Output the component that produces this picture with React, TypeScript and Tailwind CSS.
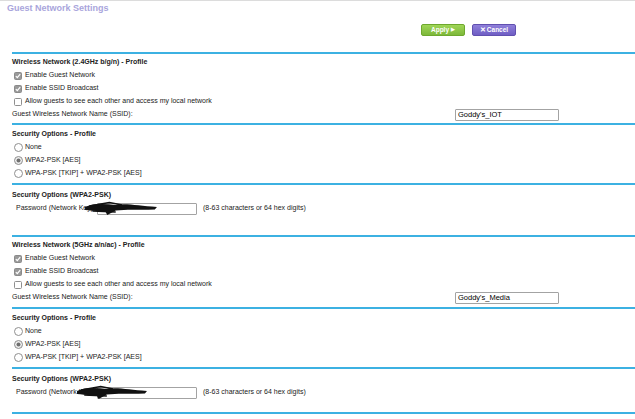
import React from "react";

const font = "font-['Liberation_Sans',Arial,sans-serif]";

function Check({ checked }: { checked?: boolean }) {
  return (
    <svg width="8" height="8" viewBox="0 0 8 8" className="shrink-0">
      <rect x="0.5" y="0.5" width="7" height="7" rx="1" fill={checked ? "#9a9a9a" : "#fff"} stroke={checked ? "#8a8a8a" : "#8f8f8f"} />
      {checked && <path d="M1.8 4.1 L3.3 5.6 L6.2 2.2" fill="none" stroke="#fff" strokeWidth="1.2" />}
    </svg>
  );
}

function Radio({ checked }: { checked?: boolean }) {
  return (
    <svg width="9" height="9" viewBox="0 0 9 9" className="shrink-0">
      <circle cx="4.5" cy="4.5" r="4" fill={checked ? "#eee" : "#fff"} stroke="#8f8f8f" />
      {checked && <circle cx="4.5" cy="4.5" r="2" fill="#6f6f6f" />}
    </svg>
  );
}

function Row({ children, className = "" }: { children: React.ReactNode; className?: string }) {
  return <div className={`flex items-center h-[13px] text-[7px] text-[#222] ${className}`}>{children}</div>;
}

function TextBox({ value, className = "" }: { value?: string; className?: string }) {
  return (
    <div className={`h-[12px] border border-[#a3a3a3] rounded-[1px] bg-white text-[7.5px] text-black pl-[2px] leading-[10px] ${className}`}>
      {value}
    </div>
  );
}

// black marker over the password, as in the screenshot
function Scribble({ left, width }: { left: string; width: number }) {
  return (
    <svg width={width} height="15" viewBox="0 0 70 15" preserveAspectRatio="none" className={`absolute top-[-1px] ${left}`}>
      <path
        d="M1 6 C10 2 20 3 30 4 C40 2 52 5 69 6 L67 8.5 C50 9 40 8 30 9.5 L22 14 L20 10 C12 10.5 6 9.5 1 9 Z"
        fill="#111"
      />
      <path d="M5 5 L24 1.5 L36 4 M8 10 L30 11" stroke="#111" strokeWidth="1.6" fill="none" />
    </svg>
  );
}

function WirelessProfile({ title, ssid, pb }: { title: string; ssid: string; pb: string }) {
  return (
    <div className={`border-t-2 border-[#3cb1e2] pt-[2px] ${pb}`}>
      <Row className="font-bold">{title}</Row>
      <Row className="pl-[2px] gap-[3px]"><Check checked />Enable Guest Network</Row>
      <Row className="pl-[2px] gap-[3px]"><Check checked />Enable SSID Broadcast</Row>
      <Row className="pl-[2px] gap-[3px]"><Check />Allow guests to see each other and access my local network</Row>
      <Row>
        <span className="w-[443px]">Guest Wireless Network Name (SSID):</span>
        <TextBox value={ssid} className="w-[104px]" />
      </Row>
    </div>
  );
}

function SecurityProfile() {
  return (
    <div className="border-t-2 border-[#3cb1e2] pt-[3px] pb-[3px]">
      <Row className="font-bold h-[13.5px]">Security Options - Profile</Row>
      <Row className="pl-[2px] gap-[2px] h-[13.5px]"><Radio />None</Row>
      <Row className="pl-[2px] gap-[2px] h-[13.5px]"><Radio checked />WPA2-PSK [AES]</Row>
      <Row className="pl-[2px] gap-[2px] h-[13.5px]"><Radio />WPA-PSK [TKIP] + WPA2-PSK [AES]</Row>
    </div>
  );
}

function PasswordBlock({ pb, second }: { pb: string; second?: boolean }) {
  return (
    <div className={`border-t-2 border-[#3cb1e2] pt-[4px] ${pb}`}>
      <Row className="font-bold">Security Options (WPA2-PSK)</Row>
      <Row className="pl-[4px] relative">
        <div className="flex items-center w-[181px]">
          <span className="whitespace-nowrap">Password (Network Key):</span>
          <TextBox className="flex-1 ml-[2px]" />
        </div>
        <span className="ml-[6px]">(8-63 characters or 64 hex digits)</span>
        {second ? <Scribble left="left-[64px]" width={72} /> : <Scribble left="left-[72px]" width={74} />}
      </Row>
    </div>
  );
}

export default function App() {
  return (
    <div className={`w-[635px] h-[419px] bg-white border-t border-[#dcdcdc] overflow-hidden ${font}`}>
      <h1 className="pl-[7px] text-[9px] font-bold text-[#a9a5dc] leading-[14px]">Guest Network Settings</h1>
      <div className="flex gap-[7px] pl-[421px] mt-[9px]">
        <button className="w-[44px] h-[12px] rounded-[2px] border border-[#6ea82e] bg-gradient-to-b from-[#9fd656] to-[#7db83a] text-white text-[6.5px] font-bold flex items-center justify-center gap-[2px]">
          Apply <span className="text-[5px]">▶</span>
        </button>
        <button className="w-[44px] h-[12px] rounded-[2px] border border-[#6150b0] bg-gradient-to-b from-[#8f7fda] to-[#6f5ec4] text-white text-[6.5px] font-bold flex items-center justify-center gap-[1px]">
          <span className="text-[7px]">✕</span>Cancel
        </button>
      </div>
      <div className="ml-[12px] mt-[16px]">
        <WirelessProfile title="Wireless Network (2.4GHz b/g/n) - Profile" ssid="Goddy's_IOT" pb="pb-[2px]" />
        <SecurityProfile />
        <PasswordBlock pb="pb-[20px]" />
        <WirelessProfile title="Wireless Network (5GHz a/n/ac) - Profile" ssid="Goddy's_Media" pb="pb-[3px]" />
        <SecurityProfile />
        <PasswordBlock pb="pb-[13px]" second />
        <div className="border-t-2 border-[#3cb1e2]" />
      </div>
    </div>
  );
}
